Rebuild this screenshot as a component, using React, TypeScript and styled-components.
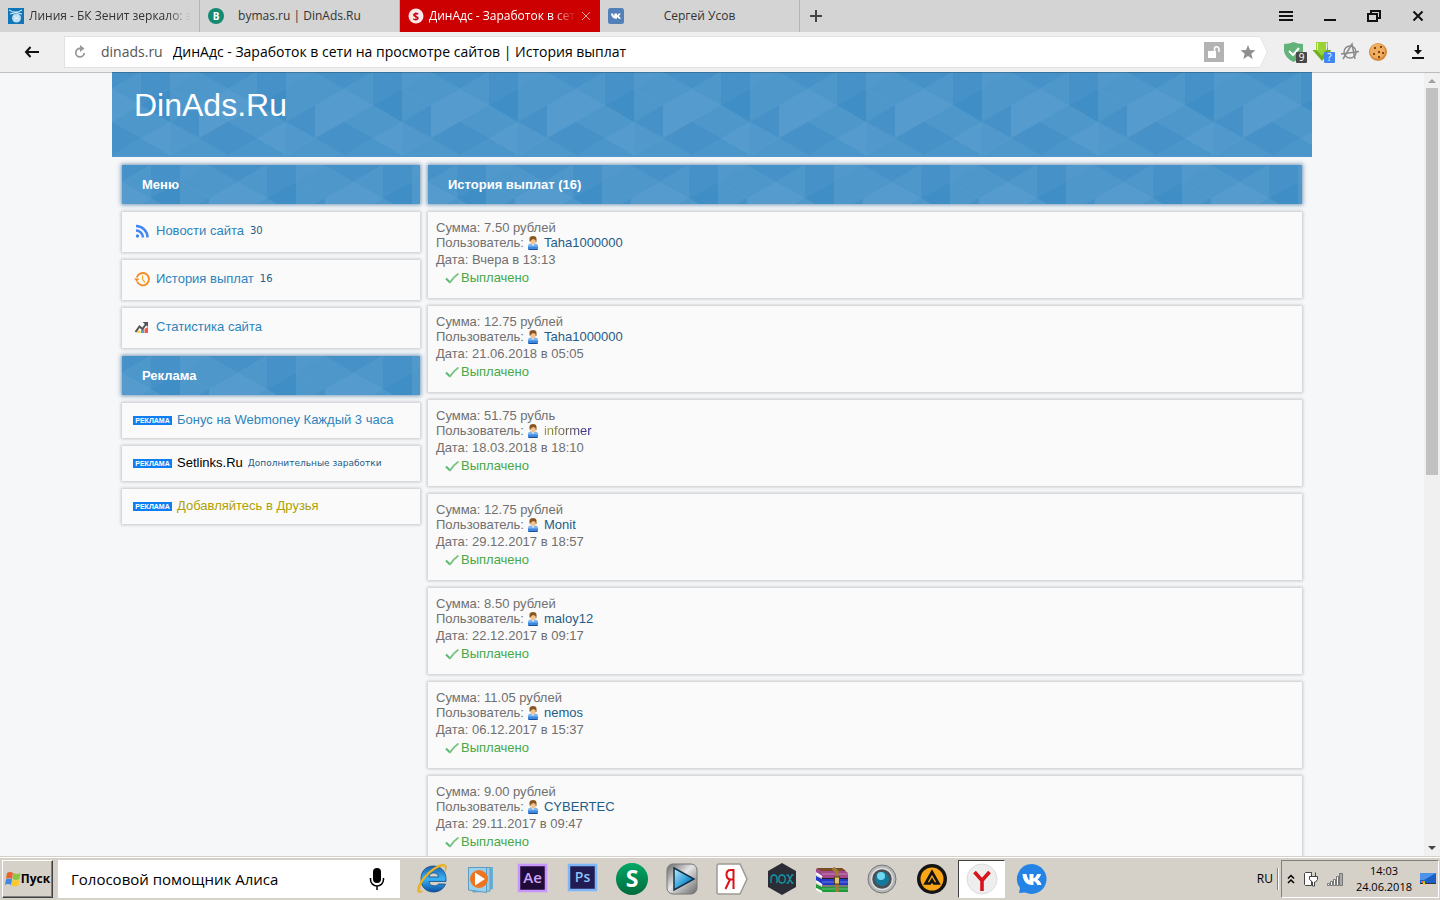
import React from "react";
import styled, { createGlobalStyle, css } from "styled-components";

const shapes: [string, string][] = [
  ["#4692c8", "29,0 58,17 29,33"],
  ["#3f8ec6", "58,17 58,50 29,33"],
  ["#5199cc", "58,0 87,0 58,17"],
  ["#4692c8", "29,0 58,0 58,17"],
  ["#4692c8", "87,0 145,0 116,17"],
  ["#4692c8", "-29,0 29,0 0,17"],
  ["#4692c8", "87,33 87,66 58,50"],
  ["#559bce", "87,33 116,17 145,33 116,50"],
  ["#559bce", "-29,33 0,17 29,33 0,50"],
  ["#559bce", "87,33 87,66 116,50"],
  ["#4692c8", "87,66 116,50 145,66 116,83"],
  ["#4692c8", "-29,66 0,50 29,66 0,83"],
  ["#559bce", "29,66 58,50 58,83"],
  ["#5199cc", "58,50 87,66 58,83"],
  ["#4a95ca", "0,83 29,66 58,83"],
];
const patternSvg =
  '<svg xmlns="http://www.w3.org/2000/svg" width="116" height="100"><rect width="116" height="100" fill="#4d97cb"/>' +
  shapes.map(([fill, points]) => `<polygon fill="${fill}" points="${points}"/>`).join("") +
  '<path d="M0 17L29 0M58 17L87 33M29 66L58 83L87 66" stroke="#5fa3d3" stroke-opacity=".25" stroke-width="1" fill="none"/></svg>';
const patternUrl = `data:image/svg+xml,${encodeURIComponent(patternSvg)}`;

const uiFont = `"Open Sans", "Noto Sans", sans-serif`;
const pageFont = `"Liberation Sans", Arial, sans-serif`;
const smallFont = `"DejaVu Sans", Verdana, sans-serif`;

const GlobalStyle = createGlobalStyle`
  * { box-sizing: border-box; }
  body { margin: 0; background: #f5f7f9; }
  button, input { font: inherit; color: inherit; }
  button { margin: 0; padding: 0; border: 0; background: none; }
  svg { display: block; flex: none; }
`;

const Desktop = styled.div`
  height: 100vh;
  display: flex;
  flex-direction: column;
  overflow: hidden;
`;

/* Browser chrome */
const TabStrip = styled.div`
  display: flex;
  flex: none;
  height: 32px;
  background: #d4d4d4;
  font: 12px/32px ${uiFont};
  color: #333;
`;
const Tab = styled.div<{ $active?: boolean }>`
  display: flex;
  align-items: center;
  flex: 0 1 200px;
  min-width: 0;
  padding: 0 8px;
  gap: 5px;
  border-right: 1px solid ${(p) => (p.$active ? "#c00" : "#b4b4b4")};
  background: ${(p) => (p.$active ? "#c00" : "transparent")};
  color: ${(p) => (p.$active ? "#fff" : "#333")};
`;
const TabTitle = styled.button<{ $centered?: boolean }>`
  flex: 1;
  min-width: 0;
  overflow: hidden;
  white-space: nowrap;
  text-align: ${(p) => (p.$centered ? "center" : "left")};
  ${(p) =>
    p.$centered
      ? css`padding-right: 21px;`
      : css`mask-image: linear-gradient(to right, #000 calc(100% - 24px), transparent);`}
`;
const NewTab = styled.button`
  display: grid;
  place-items: center;
  width: 32px;
`;
const WindowControls = styled.div`
  display: flex;
  margin-left: auto;
  button {
    width: 44px;
    display: grid;
    place-items: center;
  }
`;
const Toolbar = styled.div`
  position: relative;
  display: flex;
  align-items: center;
  flex: none;
  height: 40px;
  background: #efefef;
  box-shadow: 0 1px 0 rgba(0, 0, 0, 0.22);
`;
const BackButton = styled.button`
  width: 64px;
  display: grid;
  place-items: center;
`;
const AddressBar = styled.div`
  display: flex;
  align-items: center;
  flex: 1;
  height: 32px;
  padding: 0 4px 0 8px;
  background: #fff;
  border: 1px solid #e2e2e2;
  border-right: 0;
  font: 14px/30px ${uiFont};
  color: #000;
`;
const Domain = styled.span`
  padding: 0 10px 0 14px;
  color: #555;
`;
const AddressInput = styled.input`
  flex: 1;
  min-width: 0;
  padding: 0;
  border: 0;
  outline: 0;
  background: none;
`;
const BarIcons = styled.div`
  display: flex;
  align-items: center;
  gap: 16px;
`;
const Extensions = styled.div`
  display: flex;
  align-items: center;
  gap: 4px;
  padding: 0 10px 0 14px;
`;
const Extension = styled.button`
  position: relative;
  display: grid;
  place-items: center;
  width: 24px;
  height: 24px;
  &:last-child { margin-left: 12px; }
`;
const ExtensionBadge = styled.span<{ $color: string }>`
  position: absolute;
  right: -1px;
  bottom: 1px;
  width: 11px;
  height: 11px;
  border-radius: 1px;
  background: ${(p) => p.$color};
  color: #fff;
  font: 10px/11px ${uiFont};
  text-align: center;
`;

/* Web page */
const Viewport = styled.div`
  display: flex;
  flex: 1;
  min-height: 0;
  background: #f5f7f9;
`;
const Page = styled.div`
  flex: 1;
  min-width: 0;
  overflow: hidden;
  font: 13px/16px ${pageFont};
  color: #707070;
`;
const Container = styled.div`
  max-width: 1200px;
  margin: 0 auto;
`;
const SiteHeader = styled.header`
  height: 85px;
  padding: 13px 22px;
  background: url("${patternUrl}");
`;
const SiteTitle = styled.h1`
  margin: 0;
  font: 32px/40px ${pageFont};
  color: #fff;
`;
const Columns = styled.div`
  display: grid;
  grid-template-columns: 298px 1fr;
  gap: 8px;
  padding: 8px 10px;
`;
const Column = styled.div`
  display: flex;
  flex-direction: column;
  gap: 8px;
`;
const SectionTitle = styled.h2`
  margin: 0;
  padding-left: 20px;
  background: url("${patternUrl}");
  box-shadow: 0 0 4px 1px rgba(40, 90, 135, 0.6);
  font: bold 13px/39px ${pageFont};
  color: #fff;
`;
const panel = css`
  background: #fafafa;
  box-shadow: 0 0 3px 1px rgba(0, 0, 0, 0.2);
`;
const MenuItem = styled.a<{ $color?: string }>`
  ${panel}
  display: flex;
  align-items: center;
  gap: 6px;
  height: 40px;
  padding: 0 12px 3px;
  color: ${(p) => p.$color ?? "#2d84bd"};
  text-decoration: none;
`;
const AdItem = styled(MenuItem)`
  gap: 5px;
  height: 35px;
  padding: 0 11px 1px;
`;
const Count = styled.span`
  font: 10px/16px ${smallFont};
  color: #1f5c87;
`;
const AdNote = styled.span`
  font: 9px/16px ${smallFont};
  color: #1f5c87;
`;
const AdLabel = styled.span`
  width: 39px;
  height: 9px;
  background: #0d7ff2;
  color: #fff;
  font: bold 7px/9px ${pageFont};
  text-align: center;
`;
const Payout = styled.article`
  ${panel}
  padding: 8px 8px 10px;
`;
const Line = styled.div`
  display: flex;
  align-items: center;
  height: 16px;
`;
const UserLine = styled(Line)`
  height: 14px;
`;
const DateLine = styled(Line)`
  height: 18px;
  align-items: flex-end;
`;
const UserLink = styled.a<{ $gradient?: boolean }>`
  display: flex;
  align-items: center;
  gap: 4px;
  padding-left: 2px;
  color: #1f5c87;
  text-decoration: none;
  ${(p) =>
    p.$gradient &&
    css`
      span {
        background: linear-gradient(to right, #a59c2c, #2b2296);
        background-clip: text;
        color: transparent;
      }
    `}
`;
const Paid = styled.div`
  display: flex;
  align-items: center;
  gap: 2px;
  height: 20px;
  padding-left: 9px;
  color: #46a846;
`;
const Scrollbar = styled.div`
  display: flex;
  flex-direction: column;
  align-items: center;
  justify-content: space-between;
  width: 16px;
  padding: 6px 2px 5px;
  background: #f0f0f0;
`;
const Thumb = styled.div`
  flex: 0 0 50%;
  width: 12px;
  margin: 5px 0 auto;
  background: #c1c1c1;
`;

/* Taskbar */
const Taskbar = styled.footer`
  display: flex;
  align-items: center;
  flex: none;
  height: 44px;
  padding: 3px 1px 1px 2px;
  background: #d5d0c8;
  box-shadow: inset 0 1px 0 #d5d0c8, inset 0 2px 0 #fff;
  color: #000;
`;
const StartButton = styled.button`
  display: flex;
  align-items: center;
  justify-content: center;
  width: 51px;
  height: 38px;
  margin-right: 5px;
  border: 1px solid;
  border-color: #fff #404040 #404040 #fff;
  box-shadow: inset -1px -1px 0 #808080;
  font: bold 12px/16px ${uiFont};
`;
const Search = styled.label`
  display: flex;
  align-items: center;
  width: 342px;
  height: 38px;
  padding: 0 15px 0 13px;
  background: #fff;
  font: 15px/20px ${uiFont};
  input {
    flex: 1;
    min-width: 0;
    padding: 0;
    border: 0;
    outline: 0;
    background: none;
  }
`;
const Apps = styled.nav`
  display: flex;
  margin: 0 auto 0 8px;
  gap: 3px;
`;
const AppButton = styled.button<{ $active?: boolean }>`
  display: grid;
  place-items: center;
  width: 47px;
  height: 38px;
  ${(p) =>
    p.$active &&
    css`
      background: #fff;
      border: 1px solid;
      border-color: #404040 #fff #fff #404040;
    `}
`;
const Language = styled.span`
  padding-right: 4px;
  border-right: 1px solid #808080;
  box-shadow: 1px 0 0 #fff;
  margin-right: 3px;
  font: 12px/22px ${uiFont};
`;
const Tray = styled.div`
  display: flex;
  align-items: center;
  height: 38px;
  padding: 0 2px 0 5px;
  border: 1px solid;
  border-color: #808080 #fff #fff #808080;
  gap: 8px;
`;
const Clock = styled.time`
  margin-left: 4px;
  font: 11px/16px ${uiFont};
  text-align: center;
`;

const RssIcon = () => (
  <svg width="16" height="16" viewBox="0 0 16 16" fill="none" stroke="#4285f4" strokeWidth="2.500">
    <circle cx="3.500" cy="13" r="1.700" fill="#4285f4" stroke="none" />
    <path d="M2 7.500a7 7 0 0 1 7 7M2 3a11.500 11.500 0 0 1 11.500 11.500" />
  </svg>
);
const HistoryIcon = () => (
  <svg width="16" height="16" viewBox="0 0 16 16" fill="none" stroke="#f58a1f" strokeWidth="1.800">
    <path d="M3 10.500A6.200 6.200 0 1 0 2.800 6.500" />
    <path d="M0 7.500h5.500L2.700 10.500z" fill="#f58a1f" stroke="none" />
    <path d="M8.500 4.500v4l2.500 3" stroke="#f7b52c" strokeWidth="1.400" />
  </svg>
);
const StatsIcon = () => (
  <svg width="16" height="16" viewBox="0 0 16 16">
    <path d="M3 14v-2l2-1 2 2v1z" fill="#f2d740" />
    <path d="M7 14v-3l2-1 1 1v3z" fill="#4aa3e8" />
    <path d="M10.500 14v-4l3.500-2v6z" fill="#f05a4c" />
    <path d="M1.500 13L5.500 7.500l3 2.500L12 5" fill="none" stroke="#555" strokeWidth="2" />
    <path d="M8.500 3H14v5z" fill="#555" />
  </svg>
);
const UserIcon = () => (
  <svg width="14" height="16" viewBox="0 0 14 16">
    <path d="M2 13V11q0-2.500 3-2.500h4q3 0 3 2.500v2z" fill="#7db8f3" />
    <path d="M2 11.500h10V14l-1 1H3l-1-1z" fill="#3f87dc" />
    <path d="M2.500 14.500h9" stroke="#174f9f" />
    <path d="M5.500 8.500L7 11l1.500-2.500z" fill="#fff" />
    <path d="M4.500 3.500h5v4L8 9.500H6L4.500 7.500z" fill="#efc48f" />
    <path d="M3.500 6.500V3Q4 1 7 1t3.500 2v4h-1V5L7 4 5.500 5l-1 1.500z" fill="#8a541f" />
  </svg>
);
const CheckIcon = () => (
  <svg width="14" height="14" viewBox="0 0 14 14" fill="none" strokeWidth="2">
    <path d="M1 7.500l4 4" stroke="#5cb878" />
    <path d="M4.500 12Q8 6.500 13.500 2.500" stroke="#7cc681" />
  </svg>
);

const payouts = [
  { sum: "7.50 рублей", user: "Taha1000000", date: "Вчера в 13:13" },
  { sum: "12.75 рублей", user: "Taha1000000", date: "21.06.2018 в 05:05" },
  { sum: "51.75 рубль", user: "informer", date: "18.03.2018 в 18:10" },
  { sum: "12.75 рублей", user: "Monit", date: "29.12.2017 в 18:57" },
  { sum: "8.50 рублей", user: "maloy12", date: "22.12.2017 в 09:17" },
  { sum: "11.05 рублей", user: "nemos", date: "06.12.2017 в 15:37" },
  { sum: "9.00 рублей", user: "CYBERTEC", date: "29.11.2017 в 09:47" },
];

const svgText = { fontFamily: "Open Sans, sans-serif", textAnchor: "middle" as const };

const apps: { name: string; active?: boolean; icon: React.ReactNode }[] = [
  {
    name: "Internet Explorer",
    icon: (
      <svg width="32" height="32" viewBox="0 0 32 32">
        <defs>
          <linearGradient id="ie" x1="0" y1="0" x2="0" y2="1">
            <stop offset="0" stopColor="#1a5fb0" />
            <stop offset=".5" stopColor="#38b4f5" />
            <stop offset="1" stopColor="#0a4fa3" />
          </linearGradient>
        </defs>
        <path
          fillRule="evenodd"
          fill="url(#ie)"
          stroke="#154a86"
          strokeWidth=".8"
          d="M17.500 3c7.500 0 12.500 5.500 12.500 13v2.500H13c.4 5 7.500 5.500 9.500 2.500h7c-2 5.500-7 8-12 8-7.500 0-12.500-5-12.500-13S10 3 17.500 3zM13 14h9.500c-.5-5.500-9-5.500-9.500 0z"
        />
        <path d="M7 28c-4 3-6.500 2-5-3.500C3.500 17 15 4 25 1.500c5.500-1 7 2 4 7 1-4.500 0-6-4-5C16 6.500 6 17 4 24.500c-.8 3 .5 5 3 3.500z" fill="#f3b71d" stroke="#d99b12" strokeWidth=".4" />
      </svg>
    ),
  },
  {
    name: "Windows Media Player",
    icon: (
      <svg width="32" height="32" viewBox="0 0 32 32">
        <path d="M10 4h17v22l-17 3z" fill="#6aaed2" />
        <path d="M7 4.500h17V28l-17 1z" fill="#9bcbe4" stroke="#5a9cc4" />
        <path d="M2.500 4.500h18v25L2.500 27z" fill="#9fd0ea" stroke="#5a9cc4" />
        <circle cx="13" cy="16" r="9" fill="#ef7420" />
        <path d="M9 9.500v13l10-6.500z" fill="#fff" />
      </svg>
    ),
  },
  {
    name: "After Effects",
    icon: (
      <svg width="32" height="32" viewBox="0 0 32 32">
        <rect x="3" y="2" width="27" height="26" fill="#1f0a38" stroke="#c896fb" strokeWidth="2.500" />
        <text x="16.500" y="20" fontSize="15" fontWeight="600" fill="#cfa5f7" {...svgText}>Ae</text>
      </svg>
    ),
  },
  {
    name: "Photoshop",
    icon: (
      <svg width="32" height="32" viewBox="0 0 32 32">
        <rect x="3" y="2" width="27" height="25" fill="#221c55" stroke="#7fb6f5" strokeWidth="2.500" />
        <text x="16.500" y="19" fontSize="14" fontWeight="600" fill="#8cc2f8" {...svgText}>Ps</text>
      </svg>
    ),
  },
  {
    name: "S",
    icon: (
      <svg width="32" height="32" viewBox="0 0 32 32">
        <defs>
          <linearGradient id="s" x1="0" y1="0" x2="0" y2="1">
            <stop offset="0" stopColor="#00a867" />
            <stop offset="1" stopColor="#006b3c" />
          </linearGradient>
        </defs>
        <circle cx="16" cy="16" r="16" fill="url(#s)" />
        <text x="16" y="24" fontSize="23" fontWeight="bold" fill="#fff" {...svgText}>S</text>
      </svg>
    ),
  },
  {
    name: "Player",
    icon: (
      <svg width="32" height="32" viewBox="0 0 32 32">
        <defs>
          <linearGradient id="metal" x1="0" y1="0" x2="1" y2="1">
            <stop offset="0" stopColor="#666" />
            <stop offset=".45" stopColor="#e4e4e4" />
            <stop offset="1" stopColor="#6a6a6a" />
          </linearGradient>
          <linearGradient id="play" x1="0" y1="0" x2="1" y2="1">
            <stop offset="0" stopColor="#c5eefc" />
            <stop offset=".6" stopColor="#2597d4" />
            <stop offset="1" stopColor="#0c4a7c" />
          </linearGradient>
        </defs>
        <rect x="1" y="1" width="30" height="30" rx="6" fill="url(#metal)" stroke="#777" />
        <path d="M8 5l20 11L8 27z" fill="url(#play)" stroke="#10324a" strokeWidth="1.500" />
      </svg>
    ),
  },
  {
    name: "Яндекс",
    icon: (
      <svg width="32" height="32" viewBox="0 0 32 32">
        <path d="M3 1h21l7 15-7 15H3q-2 0-2-2V3q0-2 2-2z" fill="#fff" stroke="#9d9a94" strokeWidth="1.500" />
        <path d="M17.500 6v20M17.500 7h-3q-4 0-4 4.500t4 5h3M14 16.500L9.500 26" fill="none" stroke="#d8131b" strokeWidth="2" />
      </svg>
    ),
  },
  {
    name: "Nox",
    icon: (
      <svg width="32" height="32" viewBox="0 0 32 32">
        <path d="M16 0l14 8v16l-14 8L2 24V8z" fill="#2b2d36" />
        <path d="M5 20v-4q0-4 3-4t3 4v4M16 12q3.200 0 3.200 4T16 20t-3.200-4 3.200-4zM20.500 12h1.500l4 8h1.500M27.500 12H26l-4 8h-1.500" fill="none" stroke="#1697ad" strokeWidth="1.300" />
      </svg>
    ),
  },
  {
    name: "WinRAR",
    icon: (
      <svg width="32" height="32" viewBox="0 0 32 32">
        <path d="M0 6h27l5 4v5H6L0 10z" fill="#a3478f" />
        <path d="M0 5h26l4 3H5z" fill="#7b4a26" />
        <path d="M0 13l6 3h26v6H6l-6-4z" fill="#2338c8" />
        <path d="M0 21l6 3h26v5H6l-6-4z" fill="#1d9a3a" />
        <path d="M0 10l6 4M0 18l6 4M0 26l6 3" stroke="#fff" strokeWidth="2" />
        <path d="M6 15.500h26M6 23h26" stroke="#222" />
        <path d="M6 11h26M6 19h26M6 26h26" stroke="#fff" strokeOpacity=".35" />
        <path d="M17 5l4 4v20" fill="none" stroke="#a07c38" strokeWidth="3.500" />
        <rect x="18.500" y="14" width="5" height="7" fill="#d8c27c" stroke="#554015" />
      </svg>
    ),
  },
  {
    name: "Камера",
    icon: (
      <svg width="32" height="32" viewBox="0 0 32 32">
        <circle cx="16" cy="16" r="14" fill="#b5b7b8" stroke="#777" />
        <circle cx="16" cy="16" r="10.500" fill="#4c5054" stroke="#ddd" strokeWidth="1.500" />
        <circle cx="16" cy="16" r="7" fill="#117a9d" />
        <circle cx="15" cy="13" r="4" fill="#6fd6f0" />
      </svg>
    ),
  },
  {
    name: "AIMP",
    icon: (
      <svg width="32" height="32" viewBox="0 0 32 32">
        <circle cx="16" cy="16" r="15" fill="#141414" />
        <circle cx="16" cy="16" r="11.500" fill="#f9a617" />
        <path d="M16 9L9.500 20.500h4.500l2-3.500 2 3.500h4.500z" fill="#f9a617" stroke="#141414" strokeWidth="2.600" />
      </svg>
    ),
  },
  {
    name: "Яндекс.Браузер",
    active: true,
    icon: (
      <svg width="32" height="32" viewBox="0 0 32 32">
        <circle cx="16" cy="16" r="15" fill="#eee" stroke="#ddd" />
        <path d="M8.500 9l7.500 8.500L23.500 9M16 16.500V28" fill="none" stroke="#d6161c" strokeWidth="3.600" />
      </svg>
    ),
  },
  {
    name: "VK",
    icon: (
      <svg width="32" height="32" viewBox="0 0 32 32">
        <path d="M16 1a15 15 0 1 1-7 28.500L3 30l1-5A15 15 0 0 1 16 1z" fill="#2484e6" />
        <path d="M6.500 11h4c.8 4 2 6 3 6.500V11h4v4.500c1.500-.5 3-2.500 3.500-4.500h4c-.5 2.500-2 4.500-3.500 5.500 2 1 3.500 3 4 5.500h-4.300c-.5-2-2-3.500-3.700-4V22h-1C10 22 7 17.500 6.500 11z" fill="#fff" />
      </svg>
    ),
  },
];

export default function App() {
  return (
    <Desktop>
      <GlobalStyle />
      <TabStrip>
        <Tab>
          <svg width="16" height="16" viewBox="0 0 16 16">
            <rect width="16" height="16" fill="#0f76b9" />
            <circle cx="8.500" cy="10" r="4.500" fill="#b9dcf0" />
            <path d="M1 2l4 2h5l4-2M2 6q6-3 12 0M6 8l5 4M11 8l-5 4" fill="none" stroke="#e8f5fc" />
          </svg>
          <TabTitle>Линия - БК Зенит зеркало: з</TabTitle>
        </Tab>
        <Tab>
          <svg width="16" height="16" viewBox="0 0 16 16">
            <circle cx="8" cy="8" r="8" fill="#138a72" />
            <text x="8" y="12" fontSize="10" fontWeight="bold" fill="#fff" {...svgText}>B</text>
          </svg>
          <TabTitle $centered>bymas.ru | DinAds.Ru</TabTitle>
        </Tab>
        <Tab $active>
          <svg width="16" height="16" viewBox="0 0 16 16">
            <circle cx="8" cy="8" r="7.500" fill="#fde8e8" />
            <text x="8" y="12" fontSize="11" fontWeight="bold" fill="#c00" {...svgText}>$</text>
          </svg>
          <TabTitle>ДинАдс - Заработок в сет</TabTitle>
          <button aria-label="Закрыть вкладку">
            <svg width="10" height="10" viewBox="0 0 10 10" stroke="#f0a0a0"><path d="M1 1l8 8M9 1L1 9" /></svg>
          </button>
        </Tab>
        <Tab>
          <svg width="16" height="16" viewBox="0 0 16 16">
            <rect width="16" height="16" rx="2.500" fill="#5181b8" />
            <path d="M2.800 5.500h2l1.500 3v-3H9v2l1.700-2h2.200l-2 2.500 2.300 2.700h-2.300L9 9v1.700H7.500C5 10.700 3.500 8.500 2.800 5.500z" fill="#fff" />
          </svg>
          <TabTitle $centered>Сергей Усов</TabTitle>
        </Tab>
        <NewTab aria-label="Новая вкладка">
          <svg width="12" height="12" viewBox="0 0 12 12" stroke="#444" strokeWidth="2"><path d="M6 0v12M0 6h12" /></svg>
        </NewTab>
        <WindowControls>
          <button aria-label="Меню браузера">
            <svg width="14" height="12" viewBox="0 0 14 12" stroke="#111" strokeWidth="2"><path d="M0 2h14M0 6h14M0 10h14" /></svg>
          </button>
          <button aria-label="Свернуть">
            <svg width="12" height="12" viewBox="0 0 12 12" stroke="#111" strokeWidth="2"><path d="M0 10h12" /></svg>
          </button>
          <button aria-label="Восстановить">
            <svg width="14" height="12" viewBox="0 0 14 12" fill="none" stroke="#111" strokeWidth="2"><path d="M1 4h9v7H1zM4 4V1h9v7h-3" /></svg>
          </button>
          <button aria-label="Закрыть">
            <svg width="12" height="12" viewBox="0 0 12 12" stroke="#111" strokeWidth="2"><path d="M1.500 1.500l9 9M10.500 1.500l-9 9" /></svg>
          </button>
        </WindowControls>
      </TabStrip>

      <Toolbar>
        <BackButton aria-label="Назад">
          <svg width="16" height="12" viewBox="0 0 16 12" fill="none" stroke="#111" strokeWidth="2"><path d="M15 6H2M6.500 1L2 6l4.500 5" /></svg>
        </BackButton>
        <AddressBar>
          <button aria-label="Обновить">
            <svg width="14" height="14" viewBox="0 0 14 14" fill="none" stroke="#999" strokeWidth="1.800">
              <path d="M8 3.500H7A4.200 4.200 0 1 0 11.200 8" />
              <path d="M7 0l4.500 3.500L7 7z" fill="#999" stroke="none" />
            </svg>
          </button>
          <Domain>dinads.ru</Domain>
          <AddressInput aria-label="Адрес" defaultValue="ДинАдс - Заработок в сети на просмотре сайтов | История выплат" />
          <BarIcons>
            <button aria-label="Соединение не защищено">
              <svg width="20" height="20" viewBox="0 0 20 20">
                <rect width="20" height="20" fill="#b3b3b3" />
                <path d="M4 9h8v7H4z" fill="#fff" />
                <path d="M10.500 9V7q0-2 2-2.200T15 7v3" fill="none" stroke="#fff" strokeWidth="1.500" />
              </svg>
            </button>
            <button aria-label="В закладки">
              <svg width="16" height="16" viewBox="0 0 16 16"><path d="M8 1l2 5 5.500.3-4.200 3.500 1.400 5.200L8 12l-4.700 3 1.400-5.200L.5 6.300 6 6z" fill="#909090" /></svg>
            </button>
          </BarIcons>
        </AddressBar>
        <svg width="8" height="32" viewBox="0 0 8 32"><path d="M0 .5L7.500 16 0 31.500" fill="#fff" stroke="#e2e2e2" /></svg>
        <Extensions>
          <Extension aria-label="Защита">
            <svg width="20" height="20" viewBox="0 0 20 20">
              <path d="M0 2q5 0 9.500-2Q14 2 19 2v7q-1 7-9.500 11Q1 16 0 9z" fill="#62b27a" />
              <path d="M5 9l4 4 6-7" fill="none" stroke="#fff" strokeWidth="2" />
            </svg>
            <ExtensionBadge $color="#484848">9</ExtensionBadge>
          </Extension>
          <Extension aria-label="Загрузчик">
            <svg width="20" height="20" viewBox="0 0 20 20">
              <path d="M4 0h12v8h3.500L10 19 .5 8H4z" fill="#6fae1b" />
              <path d="M4 0h12v5L10 14 4 8z" fill="#9bd334" />
              <path d="M5.500 1v7M14.500 1v7" stroke="#efefef" strokeWidth="1" />
            </svg>
            <ExtensionBadge $color="#4285f4">?</ExtensionBadge>
          </Extension>
          <Extension aria-label="Анонимность">
            <svg width="20" height="20" viewBox="0 0 20 20" fill="none" stroke="#8a8a8a" strokeWidth="1.500">
              <circle cx="10" cy="10" r="6" />
              <path d="M3 17L12 2l3 15M1 12L19 9.500" />
            </svg>
          </Extension>
          <Extension aria-label="Cookie">
            <svg width="20" height="20" viewBox="0 0 20 20">
              <circle cx="10" cy="10" r="9" fill="#d88a3a" />
              <circle cx="9.500" cy="9" r="7.500" fill="#efad5f" />
              <path d="M6 5h2v2H6zM12 4h2v2h-2zM10 9h2v2h-2zM5 11h2v2H5zM14 10h2v2h-2zM10 14h2v2h-2z" fill="#7c4414" />
            </svg>
          </Extension>
          <Extension aria-label="Загрузки">
            <svg width="12" height="14" viewBox="0 0 12 14"><path d="M5 0h2v5h3l-4 4.500L2 5h3zM0 12h12v2H0z" fill="#111" /></svg>
          </Extension>
        </Extensions>
      </Toolbar>

      <Viewport>
        <Page>
          <Container>
            <SiteHeader>
              <SiteTitle>DinAds.Ru</SiteTitle>
            </SiteHeader>
            <Columns>
              <Column as="aside">
                <SectionTitle>Меню</SectionTitle>
                <MenuItem href="#news"><RssIcon /><span>Новости сайта</span><Count>30</Count></MenuItem>
                <MenuItem href="#payouts"><HistoryIcon /><span>История выплат</span><Count>16</Count></MenuItem>
                <MenuItem href="#stats"><StatsIcon /><span>Статистика сайта</span></MenuItem>
                <SectionTitle>Реклама</SectionTitle>
                <AdItem href="#bonus"><AdLabel>РЕКЛАМА</AdLabel><span>Бонус на Webmoney Каждый 3 часа</span></AdItem>
                <AdItem href="#setlinks" $color="#000"><AdLabel>РЕКЛАМА</AdLabel><span>Setlinks.Ru</span><AdNote>Дополнительные заработки</AdNote></AdItem>
                <AdItem href="#friends" $color="#b0a000"><AdLabel>РЕКЛАМА</AdLabel><span>Добавляйтесь в Друзья</span></AdItem>
              </Column>
              <Column as="main">
                <SectionTitle>История выплат (16)</SectionTitle>
                {payouts.map((p) => (
                  <Payout key={p.date}>
                    <Line>Сумма: {p.sum}</Line>
                    <UserLine>
                      Пользователь:
                      <UserLink href={`#${p.user}`} $gradient={p.user === "informer"}><UserIcon /><span>{p.user}</span></UserLink>
                    </UserLine>
                    <DateLine>Дата: {p.date}</DateLine>
                    <Paid><CheckIcon />Выплачено</Paid>
                  </Payout>
                ))}
              </Column>
            </Columns>
          </Container>
        </Page>
        <Scrollbar>
          <svg width="8" height="5" viewBox="0 0 8 5"><path d="M0 5l4-4 4 4z" fill="#a0a0a0" /></svg>
          <Thumb />
          <svg width="8" height="5" viewBox="0 0 8 5"><path d="M0 0h8L4 4z" fill="#444" /></svg>
        </Scrollbar>
      </Viewport>

      <Taskbar>
        <StartButton>
          <svg width="16" height="16" viewBox="0 0 16 16">
            <path d="M2 2q3-2 6 0L7 8Q4 6 1 8z" fill="#e8622c" />
            <path d="M8.500 2q3.500 2 7 0l-1 6q-3.500 2-7 0z" fill="#8cc63f" />
            <path d="M1 8.500q3-2 6 0L6 14q-3-2-6 0z" fill="#3f8ae0" />
            <path d="M7.500 8.500q3.500 2 7 0l-1 6q-3.500 2-7 0z" fill="#f8c92e" />
          </svg>
          Пуск
        </StartButton>
        <Search>
          <input aria-label="Поиск" defaultValue="Голосовой помощник Алиса" />
          <svg width="16" height="22" viewBox="0 0 16 22">
            <rect x="4" y="0" width="8" height="15" rx="4" />
            <path d="M1.500 10v1.500a6.500 6.500 0 0 0 13 0V10M8 18v4" fill="none" stroke="#000" strokeWidth="1.500" />
          </svg>
        </Search>
        <Apps>
          {apps.map((a) => (
            <AppButton key={a.name} aria-label={a.name} $active={a.active}>{a.icon}</AppButton>
          ))}
        </Apps>
        <Language>RU</Language>
        <Tray>
          <svg width="8" height="10" viewBox="0 0 8 10" fill="none" stroke="#000" strokeWidth="1.500"><path d="M1 4.500l3-3 3 3M1 9l3-3 3 3" /></svg>
          <svg width="16" height="16" viewBox="0 0 16 16" fill="#fff" stroke="#444">
            <path d="M1.500 2.500l1-1h6v13h-6l-1-1z" />
            <path d="M6.500 5.500h8v3l-2 2.500h-1v4h-2v-4l-3-2.500zM8.500 5V1.500M12.500 5V1.500" />
          </svg>
          <svg width="17" height="13" viewBox="0 0 17 13" fill="#fff" stroke="#777">
            <path d="M.5 10.500h2v2h-2zM3.500 8.500h2v4h-2zM6.500 6.500h2v6h-2zM9.500 3.500h2v9h-2z" />
            <path d="M12.500.5h3v12h-3z" fill="#aaa" />
          </svg>
          <Clock dateTime="2018-06-24T14:03">14:03<br />24.06.2018</Clock>
          <svg width="16" height="14" viewBox="0 0 16 14">
            <path d="M0 1h16v10H0z" fill="#1c5fc4" />
            <path d="M0 1h16L4 8H0z" fill="#4f93e8" />
            <path d="M0 11h16v1H0z" fill="#333" />
            <path d="M1 9h2v2H1z" fill="#e8622c" /><path d="M3 11h2v2H3z" fill="#f8c92e" /><path d="M3 9h2v2H3z" fill="#8cc63f" />
          </svg>
        </Tray>
      </Taskbar>
    </Desktop>
  );
}
